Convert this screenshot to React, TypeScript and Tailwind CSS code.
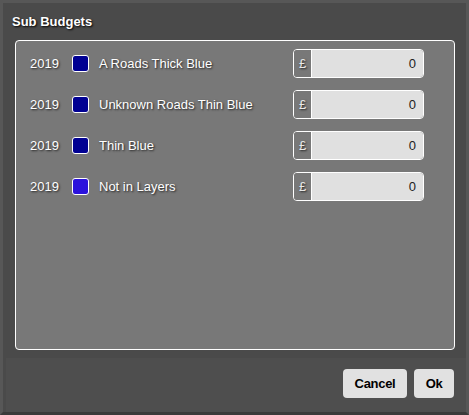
const rows = [
  { year: "2019", colour: "bg-[#000092]", label: "A Roads Thick Blue", value: "0" },
  { year: "2019", colour: "bg-[#000092]", label: "Unknown Roads Thin Blue", value: "0" },
  { year: "2019", colour: "bg-[#000092]", label: "Thin Blue", value: "0" },
  { year: "2019", colour: "bg-[#2b12dc]", label: "Not in Layers", value: "0" },
];

export default function App() {
  return (
    <div
      className="flex h-[415px] w-[469px] flex-col border-[3px] border-b-[#3a3a3a] border-l-[#575757] border-r-[#575757] border-t-[#575757] bg-[#4a4a4a] text-[13px]"
      style={{ fontFamily: '"Liberation Sans", Arial, sans-serif' }}
    >
      <div className="flex h-[37px] items-center pl-[9px]">
        <h1 className="text-[13px] font-bold text-white [text-shadow:1px_1px_2px_#000]">
          Sub Budgets
        </h1>
      </div>

      <div className="ml-[12px] mr-[11px] flex h-[310px] flex-col gap-[12px] rounded-[4px] border border-white bg-[#787878] pl-[14px] pr-[30px] pt-[8px]">
        {rows.map((row) => (
          <BudgetRow key={row.label} {...row} />
        ))}
      </div>

      <div className="ml-[3px] mt-[8px] flex flex-1 items-start justify-end gap-[7px] bg-[#4e4e4e] pr-[12px] pt-[11px]">
        <button className="h-[29px] w-[64px] rounded-[4px] bg-[#e1e1e1] text-[13px] font-bold tracking-[-0.3px] text-black">
          Cancel
        </button>
        <button className="h-[29px] w-[40px] rounded-[4px] bg-[#e1e1e1] text-[13px] font-bold tracking-[-0.3px] text-black">
          Ok
        </button>
      </div>
    </div>
  );
}

function BudgetRow({
  year,
  colour,
  label,
  value,
}: {
  year: string;
  colour: string;
  label: string;
  value: string;
}) {
  return (
    <div className="flex h-[29px] items-center text-white [text-shadow:1px_1px_2px_#222]">
      <span className="w-[42px]">{year}</span>
      <span className={`h-[17px] w-[17px] rounded-[3px] border border-white ${colour}`} />
      <span className="ml-[10px] flex-1">{label}</span>
      <div className="flex h-[29px] w-[131px] overflow-hidden rounded-[4px] border border-white">
        <span className="flex w-[18px] items-center justify-center border-r border-white bg-[#787878] text-[#e8e8e8]">
          £
        </span>
        <span className="flex flex-1 items-center justify-end bg-[#e0e0e0] pr-[7px] text-[#222] [text-shadow:none]">
          {value}
        </span>
      </div>
    </div>
  );
}
